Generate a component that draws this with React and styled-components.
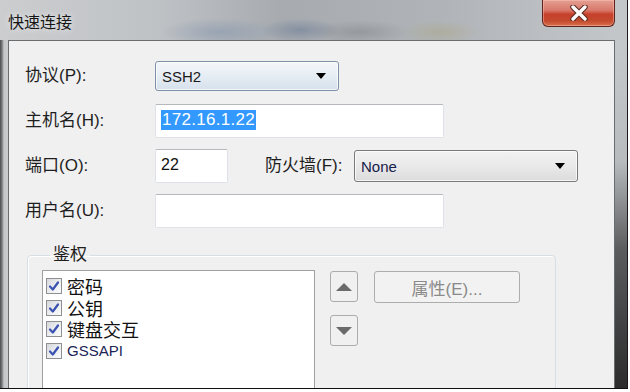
import React from "react";
import styled, { createGlobalStyle } from "styled-components";

const GlobalStyle = createGlobalStyle`
  html, body {
    margin: 0;
    padding: 0;
    background: #ffffff;
  }
  body {
    font-family: "Liberation Sans", "Noto Sans CJK SC", sans-serif;
  }
`;

const UI_FONT = `"Liberation Sans", "Noto Sans CJK SC", sans-serif`;

const Page = styled.div`
  width: 630px;
  height: 392px;
  overflow: hidden;
`;

const Window = styled.div`
  width: 627px;
  height: 388px;
  border-right: 1px solid #1a1a1a;
  border-bottom: 1px solid #111;
  display: flex;
  flex-direction: column;
  overflow: hidden;
  background: #c3c6c9;
`;

const TitleBar = styled.div`
  height: 40px;
  flex: none;
  display: flex;
  align-items: flex-start;
  justify-content: space-between;
  background:
    radial-gradient(ellipse 60px 14px at 220px 32px, rgba(120, 140, 170, 0.45), transparent),
    radial-gradient(ellipse 40px 12px at 300px 30px, rgba(90, 110, 140, 0.45), transparent),
    radial-gradient(ellipse 50px 12px at 360px 32px, rgba(120, 120, 120, 0.4), transparent),
    radial-gradient(ellipse 40px 12px at 440px 32px, rgba(170, 160, 110, 0.35), transparent),
    linear-gradient(to right, #cbcdcf 0%, #bfc2c5 25%, #a7abb0 45%, #b0b4b8 70%, #c4c7ca 100%);
`;

const Title = styled.div`
  padding: 12px 0 0 8px;
  font-size: 16px;
  line-height: 22px;
  color: #161616;
  text-shadow: 0 0 6px rgba(255, 255, 255, 0.8);
`;

const CloseButton = styled.div`
  width: 71px;
  height: 26px;
  margin-right: 12px;
  border: 1px solid #5e241a;
  border-top: none;
  border-radius: 0 0 6px 6px;
  box-shadow: inset 0 0 0 1px rgba(255, 200, 190, 0.45);
  background: linear-gradient(
    to bottom,
    #e4a093 0%,
    #d8786a 40%,
    #c6402a 55%,
    #c44a2e 80%,
    #d8704c 100%
  );
  display: flex;
  align-items: center;
  justify-content: center;
`;

const Body = styled.div`
  flex: 1;
  display: flex;
  min-height: 0;
`;

const Frame = styled.div`
  flex: none;
  width: ${(p) => p.$w}px;
  background: ${(p) =>
    p.$side === "left"
      ? "linear-gradient(to right, #4a4a4a 0px, #7a7c7e 2px, #c4c6c8 4px, #c9cbcd 100%)"
      : "linear-gradient(to bottom, #c6c9cc 0%, #b8bbbe 35%, #5a5c5e 60%, #2c2c2c 100%)"};
`;

const Client = styled.div`
  flex: 1;
  background: #f0f0f0;
  border: 1px solid #6a6d70;
  border-bottom: none;
  padding: 18px 0 0 16px;
  display: flex;
  flex-direction: column;
  overflow: hidden;
`;

const Form = styled.div`
  display: flex;
  flex-direction: column;
  gap: 11px;
`;

const Row = styled.div`
  height: 34px;
  display: flex;
  align-items: center;
`;

const Label = styled.div`
  width: ${(p) => p.$w || 130}px;
  flex: none;
  font-family: ${UI_FONT};
  font-size: 17px;
  line-height: 22px;
  color: #1e1e1e;
  margin-left: ${(p) => p.$ml || 0}px;
`;

const Select = styled.div`
  width: ${(p) => p.$w}px;
  height: ${(p) => p.$h || 30}px;
  box-sizing: border-box;
  border: 1px solid ${(p) => (p.$blue ? "#7f91a6" : "#7a7a7a")};
  border-radius: 3px;
  background: ${(p) =>
    p.$blue
      ? "linear-gradient(to bottom, #f4f7fa 0%, #e6edf4 50%, #d6e1ec 100%)"
      : "linear-gradient(to bottom, #f2f2f2 0%, #e9e9e9 50%, #dcdcdc 100%)"};
  box-shadow: inset 0 0 0 1px rgba(255, 255, 255, 0.7);
  display: flex;
  align-items: center;
  justify-content: space-between;
  padding: 0 12px 0 6px;
  font-family: ${UI_FONT};
  font-size: 15px;
  color: ${(p) => (p.$blue ? "#1a1a1a" : "#16204a")};
`;

const Arrow = styled.span`
  width: 0;
  height: 0;
  border-left: 5px solid transparent;
  border-right: 5px solid transparent;
  border-top: 6px solid #000;
`;

const Input = styled.div`
  width: ${(p) => p.$w}px;
  height: 34px;
  box-sizing: border-box;
  border: 1px solid #dfe3e8;
  border-top-color: #b5b8bd;
  border-radius: 2px;
  background: #fff;
  display: flex;
  align-items: center;
  padding: 0 0 2px 5px;
  font-family: ${UI_FONT};
  font-size: 16px;
  color: #111;
`;

const Selected = styled.span`
  background: #3399ff;
  color: #fff;
  padding: 1px 1px;
  line-height: 18px;
  font-size: 17px;
  letter-spacing: 0.3px;
`;

const Group = styled.fieldset`
  margin: 16px 0 0 2px;
  width: 529px;
  box-sizing: border-box;
  border: 1px solid #d5dfe5;
  border-radius: 4px;
  box-shadow: inset 1px 1px 0 #ffffff;
  padding: 4px 0 0 14px;
  min-height: 200px;
  display: flex;
  align-items: flex-start;
`;

const Legend = styled.legend`
  margin-left: 8px;
  padding: 0 3px;
  font-family: ${UI_FONT};
  font-size: 17px;
  line-height: 22px;
  color: #1e1e1e;
`;

const GroupRow = styled.div`
  display: flex;
  align-items: flex-start;
`;

const List = styled.div`
  width: 273px;
  height: 140px;
  box-sizing: border-box;
  border: 1px solid #a0a0a0;
  background: #fff;
  padding: 6px 0 0 3px;
  display: flex;
  flex-direction: column;
  gap: 3.5px;
`;

const Item = styled.div`
  display: flex;
  align-items: center;
  gap: 5px;
  height: 18px;
  font-family: ${UI_FONT};
  font-size: ${(p) => (p.$latin ? 15 : 18)}px;
  color: ${(p) => (p.$latin ? "#1c2555" : "#111")};
`;

const Box = styled.span`
  width: 16px;
  height: 16px;
  flex: none;
  box-sizing: border-box;
  border: 1px solid #8e8f91;
  background: linear-gradient(135deg, #d6d8dc 0%, #eef0f2 60%, #fbfbfb 100%);
  display: flex;
  align-items: center;
  justify-content: center;
`;

const Arrows = styled.div`
  margin: 1px 0 0 15px;
  display: flex;
  flex-direction: column;
  gap: 13px;
`;

const SmallButton = styled.div`
  width: 28px;
  height: 31px;
  box-sizing: border-box;
  border: 1px solid #acacac;
  border-radius: 3px;
  background: #f0f0f0;
  display: flex;
  align-items: center;
  justify-content: center;
`;

const Triangle = styled.span`
  width: 0;
  height: 0;
  border-left: 8px solid transparent;
  border-right: 8px solid transparent;
  ${(p) => (p.$up ? "border-bottom" : "border-top")}: 8px solid #6a6a6a;
`;

const PropButton = styled.div`
  margin: 1px 0 0 16px;
  width: 146px;
  height: 32px;
  box-sizing: border-box;
  border: 1px solid #adadad;
  border-radius: 3px;
  background: #f2f2f2;
  display: flex;
  align-items: center;
  justify-content: center;
  font-family: ${UI_FONT};
  font-size: 17px;
  color: #8a8a8a;
`;

const Check = () => (
  <svg width="12" height="12" viewBox="0 0 12 12">
    <path
      d="M2 6.5 L4.8 9.5 L10 2.5"
      fill="none"
      stroke="#3a52b0"
      strokeWidth="2.2"
      strokeLinecap="round"
      strokeLinejoin="round"
    />
  </svg>
);

const CloseGlyph = () => (
  <svg width="20" height="16" viewBox="0 0 20 16">
    <path
      d="M4 2 L16 14 M16 2 L4 14"
      stroke="#5a2a22"
      strokeWidth="5.5"
      strokeLinecap="round"
    />
    <path
      d="M4 2 L16 14 M16 2 L4 14"
      stroke="#ffffff"
      strokeWidth="3.4"
      strokeLinecap="round"
    />
  </svg>
);

const methods = [
  { name: "密码" },
  { name: "公钥" },
  { name: "键盘交互" },
  { name: "GSSAPI", latin: true },
];

const App = () => (
  <Page>
    <GlobalStyle />
    <Window>
      <TitleBar>
        <Title>快速连接</Title>
        <CloseButton>
          <CloseGlyph />
        </CloseButton>
      </TitleBar>
      <Body>
        <Frame $side="left" $w={8} />
        <Client>
          <Form>
            <Row>
              <Label>协议(P):</Label>
              <Select $w={184} $blue>
                SSH2
                <Arrow />
              </Select>
            </Row>
            <Row>
              <Label>主机名(H):</Label>
              <Input $w={289}>
                <Selected>172.16.1.22</Selected>
              </Input>
            </Row>
            <Row>
              <Label>端口(O):</Label>
              <Input $w={73}>22</Input>
              <Label $w={89} $ml={37}>
                防火墙(F):
              </Label>
              <Select $w={224} $h={32}>
                None
                <Arrow />
              </Select>
            </Row>
            <Row>
              <Label>用户名(U):</Label>
              <Input $w={289} />
            </Row>
          </Form>
          <Group>
            <Legend>鉴权</Legend>
            <GroupRow>
              <List>
                {methods.map((m) => (
                  <Item key={m.name} $latin={m.latin}>
                    <Box>
                      <Check />
                    </Box>
                    {m.name}
                  </Item>
                ))}
              </List>
              <Arrows>
                <SmallButton>
                  <Triangle $up />
                </SmallButton>
                <SmallButton>
                  <Triangle />
                </SmallButton>
              </Arrows>
              <PropButton>属性(E)...</PropButton>
            </GroupRow>
          </Group>
        </Client>
        <Frame $side="right" $w={12} />
      </Body>
    </Window>
  </Page>
);

export default App;
